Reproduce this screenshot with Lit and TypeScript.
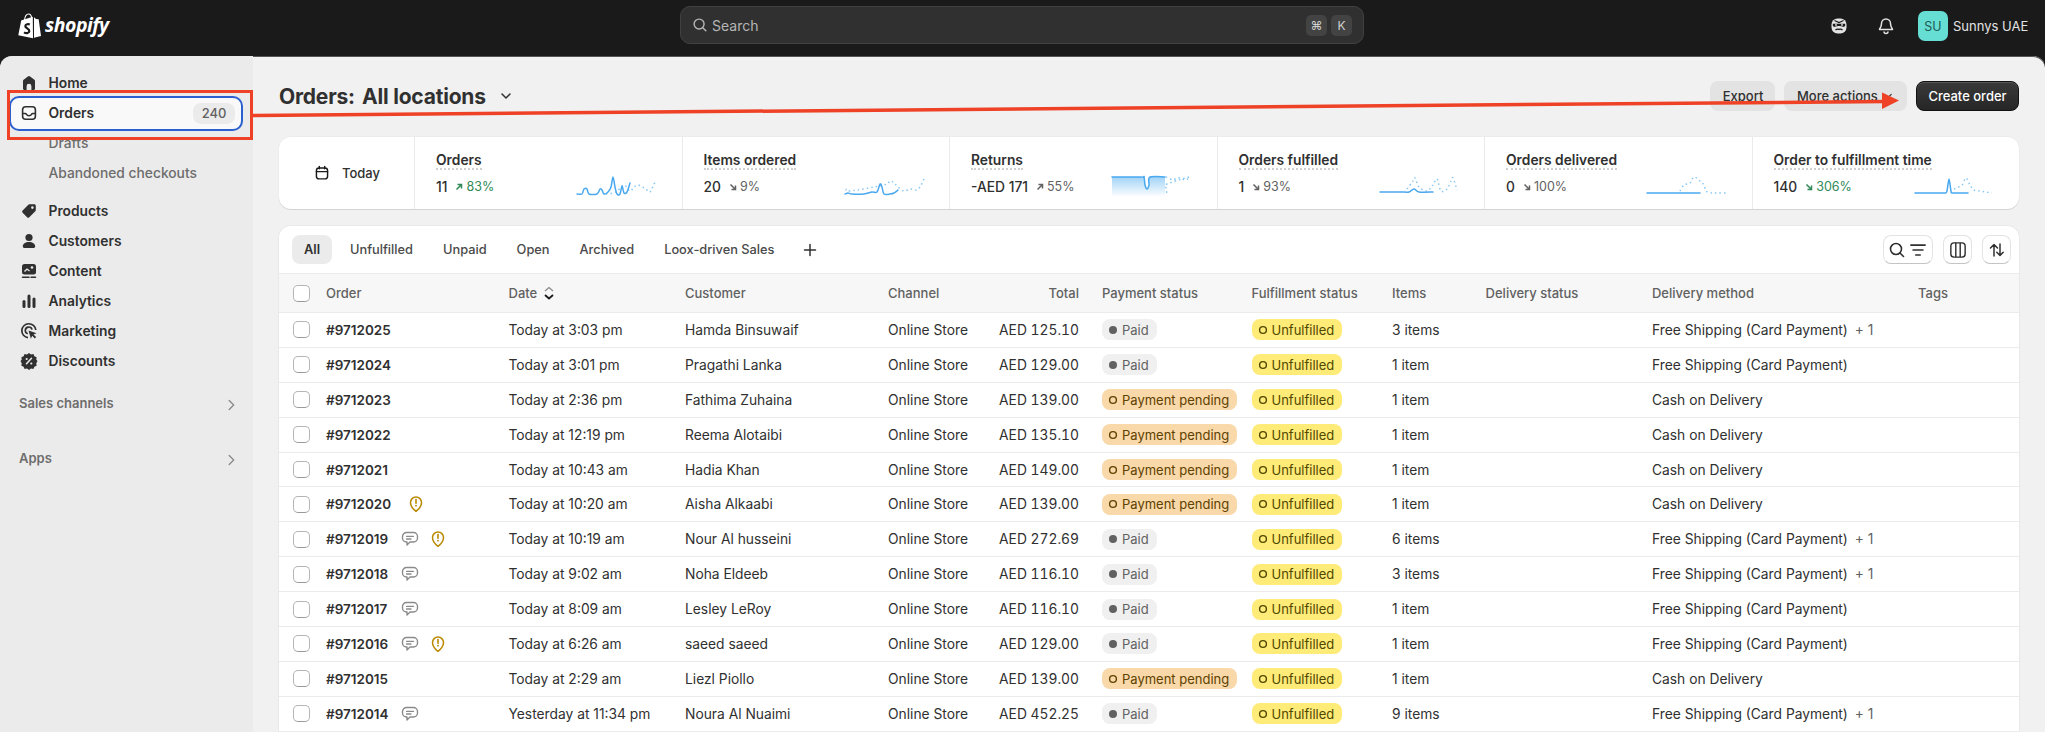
import { LitElement, html, css, svg } from "lit";
import { customElement } from "lit/decorators.js";

type Pt = [number, number];
const smooth = (p: Pt[]) => {
  const k = 0.16;
  let d = `M${p[0][0]} ${p[0][1]}`;
  for (let i = 0; i < p.length - 1; i++) {
    const a = p[Math.max(i - 1, 0)], b = p[i], c = p[i + 1], e = p[Math.min(i + 2, p.length - 1)];
    const c1x = b[0] + (c[0] - a[0]) * k, c1y = b[1] + (c[1] - a[1]) * k;
    const c2x = c[0] - (e[0] - b[0]) * k, c2y = c[1] - (e[1] - b[1]) * k;
    d += ` C${c1x.toFixed(1)} ${c1y.toFixed(1)} ${c2x.toFixed(1)} ${c2y.toFixed(1)} ${c[0]} ${c[1]}`;
  }
  return d;
};

interface Stat {
  label: string; value: string; pct: string; up: boolean; good: boolean;
  solid: Pt[]; dots: Pt[]; fill?: boolean;
}

const stats: Stat[] = [
  {
    label: "Orders", value: "11", pct: "83%", up: true, good: true,
    solid: [[1,19],[6,19],[8,14],[11,14],[13,19],[21,19],[24,14],[26,15],[28,19],[32,17],[35,12],[37,2],[39,12],[41,19],[44,19],[46,11],[48,18],[51,17],[54,8]],
    dots: [[30,19],[40,17],[48,10],[54,16],[58,12],[62,10],[66,12],[70,14],[74,17],[78,9],[81,6]],
  },
  {
    label: "Items ordered", value: "20", pct: "9%", up: false, good: false,
    solid: [[1,19],[4,18],[8,19],[20,19],[28,17],[33,17],[36,9],[38,12],[40,19],[46,19],[50,18],[54,15]],
    dots: [[2,14],[6,16],[40,10],[46,6],[50,8],[54,12],[60,16],[66,14],[72,15],[76,12],[80,4]],
  },
  {
    label: "Returns", value: "-AED 171", pct: "55%", up: true, good: false, fill: true,
    solid: [[1,2],[30,2],[33,2],[34,10],[36,14],[38,10],[39,2],[54,2]],
    dots: [[55,2],[58,3],[62,5],[66,3],[70,3],[74,5],[78,2],[56,9],[55,13],[56,19]],
  },
  {
    label: "Orders fulfilled", value: "1", pct: "93%", up: false, good: false,
    solid: [[1,17],[25,17],[30,17],[35,14],[40,17],[54,17]],
    dots: [[28,14],[34,6],[36,3],[40,12],[48,16],[54,10],[58,4],[62,16],[68,14],[72,6],[74,3],[78,15]],
  },
  {
    label: "Orders delivered", value: "0", pct: "100%", up: false, good: false,
    solid: [[1,18],[54,18]],
    dots: [[34,16],[38,10],[44,8],[48,2],[54,6],[58,10],[60,16],[66,18],[72,18],[80,18]],
  },
  {
    label: "Order to fulfillment time", value: "140", pct: "306%", up: false, good: true,
    solid: [[1,18],[24,18],[31,18],[33,16],[35,4],[37,16],[39,18],[54,18]],
    dots: [[40,14],[48,10],[52,3],[56,10],[60,15],[66,16],[72,17],[78,18]],
  },
];

const paid = "paid", pending = "pending";
const FREE = "Free Shipping (Card Payment)", COD = "Cash on Delivery";
const rows = [
  ["#9712025", "", "Today at 3:03 pm", "Hamda Binsuwaif", "AED 125.10", paid, "3 items", FREE, true],
  ["#9712024", "", "Today at 3:01 pm", "Pragathi Lanka", "AED 129.00", paid, "1 item", FREE, false],
  ["#9712023", "", "Today at 2:36 pm", "Fathima Zuhaina", "AED 139.00", pending, "1 item", COD, false],
  ["#9712022", "", "Today at 12:19 pm", "Reema Alotaibi", "AED 135.10", pending, "1 item", COD, false],
  ["#9712021", "", "Today at 10:43 am", "Hadia Khan", "AED 149.00", pending, "1 item", COD, false],
  ["#9712020", "p", "Today at 10:20 am", "Aisha Alkaabi", "AED 139.00", pending, "1 item", COD, false],
  ["#9712019", "cp", "Today at 10:19 am", "Nour Al husseini", "AED 272.69", paid, "6 items", FREE, true],
  ["#9712018", "c", "Today at 9:02 am", "Noha Eldeeb", "AED 116.10", paid, "3 items", FREE, true],
  ["#9712017", "c", "Today at 8:09 am", "Lesley LeRoy", "AED 116.10", paid, "1 item", FREE, false],
  ["#9712016", "cp", "Today at 6:26 am", "saeed saeed", "AED 129.00", paid, "1 item", FREE, false],
  ["#9712015", "", "Today at 2:29 am", "Liezl Piollo", "AED 139.00", pending, "1 item", COD, false],
  ["#9712014", "c", "Yesterday at 11:34 pm", "Noura Al Nuaimi", "AED 452.25", paid, "9 items", FREE, true],
] as const;

const navIcon: Record<string, unknown> = {
  home: svg`<path fill="currentColor" d="M8.900 3.400a1.800 1.800 0 0 1 2.200 0l4.300 3.400c.4.300.6.800.6 1.400v7.300c0 .8-.7 1.500-1.500 1.500H12.400v-3.800a2.400 2.400 0 0 0-4.800 0V17H5.500c-.8 0-1.500-.7-1.500-1.500V8.200c0-.6.2-1.100.6-1.400z"/>`,
  orders: svg`<g fill="none" stroke="currentColor" stroke-width="1.600"><rect x="3.600" y="3.800" width="12.800" height="12.400" rx="3"/><path d="M3.600 10.500h2.600c.6 0 1 .4 1.300.9.500.9 1.400 1.300 2.500 1.300s2-.4 2.500-1.300c.3-.5.7-.9 1.300-.9h2.600"/></g>`,
  tag: svg`<path fill="currentColor" fill-rule="evenodd" d="M11 3.200h4.300c.8 0 1.500.7 1.500 1.500V9c0 .5-.2.900-.5 1.200l-6 6a1.600 1.600 0 0 1-2.200 0l-4.500-4.500a1.600 1.600 0 0 1 0-2.200l6-6c.4-.2.900-.3 1.400-.3zm2.400 2.100a1.300 1.300 0 1 0 0 2.600 1.300 1.300 0 0 0 0-2.600z"/>`,
  person: svg`<circle cx="10" cy="6.500" r="3.600" fill="currentColor"/><path fill="currentColor" d="M3.800 15.600c0-2.900 2.600-4.600 6.200-4.600s6.200 1.700 6.200 4.600c0 .8-.6 1.400-1.400 1.400H5.200c-.8 0-1.400-.6-1.400-1.400z"/>`,
  content: svg`<rect x="3" y="3" width="14" height="10.500" rx="2.500" fill="currentColor"/><circle cx="13" cy="6.500" r="1.300" fill="#ebebeb"/><path d="M5.500 10.500l2.500-2.500 2.500 2" fill="none" stroke="#ebebeb" stroke-width="1.300"/><path d="M3.500 16.300h6.500M12 16.300h4.500" stroke="currentColor" stroke-width="1.500" stroke-linecap="round"/>`,
  bars: svg`<rect x="3.500" y="9" width="3" height="8" rx="1.500" fill="currentColor"/><rect x="8.500" y="3.500" width="3" height="13.500" rx="1.500" fill="currentColor"/><rect x="13.500" y="6.500" width="3" height="10.500" rx="1.500" fill="currentColor"/>`,
  target: svg`<path d="M9 16.700A7 7 0 1 1 16.800 9" fill="none" stroke="currentColor" stroke-width="1.700"/><path d="M8.800 12.700A3.400 3.400 0 1 1 13 8.600" fill="none" stroke="currentColor" stroke-width="1.700"/><path fill="currentColor" d="M9.500 9.500l8 2.700-3 1.300 2.600 2.600-1.300 1.300-2.600-2.600-1.300 3z"/>`,
  badge: svg`<path fill="currentColor" d="M10 2l2 1.400 2.400-.3 1 2.200 2.200 1-.3 2.400L18.500 10l-1.200 2.300.3 2.400-2.200 1-1 2.200-2.400-.3L10 19l-2-1.400-2.400.3-1-2.200-2.200-1 .3-2.400L1.500 10l1.200-1.300-.3-2.400 2.200-1 1-2.200 2.400.3z"/><path d="M7.500 12.800l5-5.500" stroke="#ebebeb" stroke-width="1.500" stroke-linecap="round"/><circle cx="7.700" cy="8" r="1.100" fill="#ebebeb"/><circle cx="12.300" cy="12.500" r="1.100" fill="#ebebeb"/>`,
};

const nav = [
  ["home", "Home"], ["orders", "Orders"], ["", "Drafts"], ["", "Abandoned checkouts"],
];
const nav2 = [
  ["tag", "Products"], ["person", "Customers"], ["content", "Content"],
  ["bars", "Analytics"], ["target", "Marketing"], ["badge", "Discounts"],
];

const ic = (body: unknown, size = 20, cls = "") =>
  html`<svg class=${cls} width=${size} height=${size} viewBox="0 0 20 20" aria-hidden="true">${body}</svg>`;

const chevronR = svg`<path d="M8 5l5 5-5 5" fill="none" stroke="currentColor" stroke-width="1.500" stroke-linecap="round" stroke-linejoin="round"/>`;
const chevronD = svg`<path d="M6 8l4 4 4-4" fill="none" stroke="currentColor" stroke-width="1.500" stroke-linecap="round" stroke-linejoin="round"/>`;
const searchI = svg`<circle cx="9" cy="9" r="5.500" fill="none" stroke="currentColor" stroke-width="1.600"/><path d="M13 13l3.500 3.500" stroke="currentColor" stroke-width="1.600" stroke-linecap="round"/>`;
const comment = svg`<path d="M6.500 3.500h7a4 4 0 0 1 4 4v1.500a4 4 0 0 1-4 4H10l-3 3v-3h-.5a4 4 0 0 1-4-4V7.500a4 4 0 0 1 4-4z" fill="none" stroke="#8a8a8a" stroke-width="1.400" stroke-linejoin="round"/><path d="M6.500 7.300h7M6.500 10h4.500" stroke="#8a8a8a" stroke-width="1.300" stroke-linecap="round"/>`;
const pin = svg`<path d="M10 17.300C7 15 4.500 12.500 4.500 8.500a5.500 5.500 0 0 1 11 0c0 4-2.500 6.500-5.500 8.800z" fill="none" stroke="#b98900" stroke-width="1.500" stroke-linejoin="round"/><path d="M10 5.500v3.700" stroke="#b98900" stroke-width="1.600" stroke-linecap="round"/><circle cx="10" cy="11.700" r=".9" fill="#b98900"/>`;

@customElement("app-root")
export class AppRoot extends LitElement {
  static styles = css`
    :host { display: block; position: relative; width: 2045px; height: 732px; overflow: hidden; background: #1a1a1a;
      font-family: Inter, "Liberation Sans", sans-serif; font-size: 13.800px; color: #303030; }
    * { box-sizing: border-box; }
    svg { display: block; flex: none; }
    .top { height: 56px; display: grid; grid-template-columns: 1fr 683px 1fr; align-items: center; padding: 0 18px 4px; color: #e3e3e3; }
    .brand { display: flex; align-items: center; gap: 4px; color: #fff; }
    .word { font-family: "Open Sans", sans-serif; font-style: italic; font-weight: 700; font-size: 19.500px; letter-spacing: -0.5px; line-height: 1; padding-bottom: 3px; }
    .search { margin: -2px 0 0 -1px; height: 38px; display: flex; align-items: center; background: #303030; border: 1px solid #414141; border-radius: 10px; padding: 0 11px 0 10px; color: #b5b5b5; }
    .search .lbl { margin-left: 3px; flex: 1; font-size: 14px; }
    .key { width: 21px; height: 21px; border-radius: 5px; background: #434343; display: grid; place-items: center; font-size: 12px; color: #d0d0d0; margin-left: 4px; }
    .right { display: flex; align-items: center; justify-content: flex-end; }
    .avatar { width: 30px; height: 30px; border-radius: 7px; background: #66ded3; color: #1e5a55; display: grid; place-items: center; font-size: 12.500px; margin-left: 22px; }
    .store { margin-left: 5px; white-space: nowrap; font-size: 13px; width: 74px; }
    .gap30 { margin-left: 27px; }

    .shell { height: 676px; display: flex; border-radius: 12px 12px 0 0; overflow: hidden; background: #f1f1f1; box-shadow: inset 0 1px 0 #555; }
    .side { width: 253px; flex: none; background: #ebebeb; padding-top: 12px; }
    .item { height: 30px; display: flex; align-items: center; padding-left: 19px; font-weight: 600; gap: 9.500px; color: #303030; }
    .item.sub { padding-left: 48.500px; color: #6d6d6d; font-weight: 500; }
    .item.active { height: 35px; margin: -2.500px 10px -2.500px 9px; padding: 0 6px 0 8px; background: #f9f9f9; border: 2px solid #2c5fcf; border-radius: 10px; color: #303030; }
    .count { margin-left: auto; height: 21px; width: 42px; border-radius: 8px; background: #ebebeb; display: grid; place-items: center; color: #616161; font-weight: 500; font-size: 13px; }
    .group { margin-top: 7.500px; }
    .section { display: flex; align-items: center; justify-content: space-between; height: 20px; padding: 0 13px 0 19px; color: #6d6d6d; font-weight: 600; font-size: 13px; }
    .section svg { color: #8a8a8a; margin-top: 4px; }
    .sec1 { margin-top: 17px; }
    .sec2 { margin-top: 35px; }

    .main { flex: 1; min-width: 0; padding: 25px 26px 0; }
    .head { height: 30px; display: flex; align-items: center; gap: 9px; }
    .title { font-size: 21px; font-weight: 650; color: #303030; display: flex; gap: 7px; letter-spacing: -0.2px; }
    .chev { color: #303030; margin-left: 1px; }
    .actions { margin-left: auto; display: flex; gap: 9px; font-size: 13px; }
    .btn { height: 30px; padding: 0 12px; border-radius: 8px; background: #e3e3e3; display: flex; align-items: center; gap: 2px; font-weight: 550; color: #303030; white-space: nowrap; }
    .btn.primary { background: linear-gradient(#3a3a3a, #262626); color: #fff; border: 1px solid #111; box-shadow: inset 0 1px 0 #555; width: 103px; justify-content: center; padding: 0; }
    .btn.wide { width: 123px; padding: 0 12px 0 13px; }
    .btn.exp { width: 65px; justify-content: center; padding: 0 0 0 1px; }

    .stats { margin-top: 26px; height: 72px; background: #fff; border-radius: 12px; display: grid; grid-template-columns: 135px repeat(6, minmax(0, 1fr)); box-shadow: 0 1px 0 rgba(0,0,0,.1), 0 0 0 1px rgba(0,0,0,.02); overflow: hidden; }
    .today { display: flex; align-items: center; gap: 11px; padding-left: 34px; font-weight: 550; font-size: 13px; }
    .stat { border-left: 1px solid #ebebeb; display: flex; align-items: flex-end; padding: 0 0 12px 21px; }
    .stat .txt { width: 140px; flex: none; align-self: stretch; display: flex; flex-direction: column; padding-top: 15px; }
    .lab { font-weight: 600; align-self: flex-start; line-height: 16px; border-bottom: 2px dotted #cfcfcf; white-space: nowrap; }
    .val { display: flex; align-items: center; margin-top: 9px; line-height: 16px; font-weight: 500; white-space: nowrap; }
    .pct { display: flex; align-items: center; gap: 2px; margin-left: 7px; color: #616161; font-size: 12.500px; font-weight: 400; }
    .pct.good { color: #2f8a57; }

    .table { margin-top: 17px; background: #fff; border-radius: 12px 12px 0 0; box-shadow: 0 0 0 1px rgba(0,0,0,.03); }
    .tabs { height: 47px; display: flex; align-items: center; padding: 0 8px 0 13px; gap: 6px; font-size: 12.800px; }
    .tab { height: 29px; padding: 0 12px; border-radius: 8px; display: flex; align-items: center; font-weight: 500; color: #4a4a4a; }
    .tab.on { background: #ebebeb; color: #303030; font-weight: 600; }
    .plus { margin-left: 8px; color: #303030; }
    .tools { margin-left: auto; display: flex; gap: 10px; }
    .tool { height: 29px; min-width: 29px; background: #fff; border-radius: 8px; border: 1px solid #e3e3e3; border-bottom-color: #c4c4c4; display: flex; align-items: center; justify-content: center; color: #303030; }
    .tool.two { width: 50px; }
    .grid { display: grid; grid-template-columns: 47px 182.500px 176.500px 203px 100px 114px 149.500px 140.500px 93.600px 166.400px 266px 101px; align-items: center; }
    .grid.hd { height: 40px; background: #f7f7f7; border-top: 1px solid #ebebeb; border-bottom: 1px solid #ebebeb; color: #616161; font-weight: 550; font-size: 13px; }
    .grid.row { height: 34.900px; border-bottom: 1px solid #ebebeb; color: #303030; }
    .cb { width: 17px; height: 17px; margin-left: 14px; border: 1px solid #b5b5b5; border-bottom-color: #9a9a9a; border-radius: 5px; background: #fff; }
    .sort { display: inline-flex; align-items: center; gap: 2px; }
    .ord { display: flex; align-items: center; font-weight: 600; font-size: 13.500px; }
    .num { width: 66px; flex: none; }
    .ico { margin-left: 8px; }
    .ico.alone { margin-left: 14px; }
    .tot { text-align: right; padding-right: 23px; white-space: nowrap; }
    .row .tot { font-variant-numeric: tabular-nums; }
    .chip { display: inline-flex; align-items: center; height: 21px; border-radius: 8px; padding: 0 8px 0 6px; font-size: 13px; gap: 4px; white-space: nowrap; }
    .chip.paid { background: #f0f0f0; color: #616161; }
    .chip.pending { background: #f9d8a9; color: #5e4200; }
    .chip.unf { background: #ffeb78; color: #4f4700; }
    .more { color: #616161; margin-left: 7px; }
    .nowrap { white-space: nowrap; display: flex; }

    .annot { position: absolute; inset: 0; pointer-events: none; }
  `;

  private spark(s: Stat) {
    const d = smooth(s.solid);
    const end = s.solid[s.solid.length - 1];
    return html`<svg width="84" height="22" viewBox="0 0 84 22" aria-hidden="true">
      <defs><linearGradient id="sf" x1="0" y1="0" x2="0" y2="1"><stop offset="0" stop-color="#9fd2f7"/><stop offset="1" stop-color="#ffffff"/></linearGradient></defs>
      ${s.fill ? svg`<path d="${d} L${end[0]} 22 L1 22 Z" fill="url(#sf)"/>` : ""}
      <path d=${smooth(s.dots)} fill="none" stroke="#8ac8f4" stroke-width="1.500" stroke-dasharray="1.500 3"/>
      <path d=${d} fill="none" stroke="#4aa8ef" stroke-width="1.500" stroke-linejoin="round" stroke-linecap="round"/>
    </svg>`;
  }

  private trend(up: boolean) {
    return html`<svg width="10" height="10" viewBox="0 0 10 10" aria-hidden="true">
      ${up
        ? svg`<path d="M2.500 7.500L7 3M3.500 2.500H7.500V6.500" fill="none" stroke="currentColor" stroke-width="1.500"/>`
        : svg`<path d="M2.500 2.500L7 7M3.500 7.500H7.500V3.500" fill="none" stroke="currentColor" stroke-width="1.500"/>`}
    </svg>`;
  }

  private ring(color: string, solid = false) {
    return html`<svg width="10" height="10" viewBox="0 0 10 10" aria-hidden="true">
      <circle cx="5" cy="5" r=${solid ? 4 : 3.400} fill=${solid ? color : "none"} stroke=${color} stroke-width=${solid ? 0 : 1.400}/>
    </svg>`;
  }

  render() {
    return html`
      <header class="top">
        <div class="brand">
          <svg width="23" height="26" viewBox="0 0 23 26" aria-hidden="true">
            <path fill="#fff" d="M14.800 3.800L3.700 7.200c-.4.100-.5.300-.6.700L.3 22.300 15 25.200z"/>
            <path fill="#fff" d="M16 4.200l2 1.800 2.400.2c.2 0 .3.100.3.300L23 23l-7 1.700z"/>
            <path fill="none" stroke="#fff" stroke-width="1.100" d="M6.500 7C7 3.500 8.700 1 10.500 1c1.900 0 3 2 3.200 4.500"/>
            <path fill="none" stroke="#1a1a1a" stroke-width="2.200" d="M11.800 11.500c-1.500-.8-4.300-.5-4.500 1.500-.2 2.400 4.300 2.500 4 5.200-.3 2.500-3.500 2.300-5.300 1.200"/>
          </svg>
          <span class="word">shopify</span>
        </div>
        <div class="search">
          ${ic(searchI, 18)}
          <span class="lbl">Search</span>
          <span class="key">⌘</span><span class="key">K</span>
        </div>
        <div class="right">
          ${ic(svg`<rect x="2.500" y="2.500" width="15" height="15" rx="6" fill="#e3e3e3"/><path d="M5.500 4.500L10 6.500l4.500-2" stroke="#1a1a1a" stroke-width="1.200" fill="none"/><path d="M3.800 7.800h12.400v1.400c0 1-1 1.600-2.200 1.600-1.300 0-2.500-.7-4-.7s-2.700.7-4 .7c-1.200 0-2.200-.6-2.200-1.600z" fill="#1a1a1a"/><circle cx="7" cy="8.900" r=".9" fill="#e3e3e3"/><circle cx="13" cy="8.900" r=".9" fill="#e3e3e3"/><path d="M6.500 14c1-.9 2.300-1.200 3.500-.6 1.200-.6 2.500-.3 3.500.6" stroke="#1a1a1a" stroke-width="1.300" fill="none"/>`)}
          <span class="gap30">${ic(svg`<path d="M10 3a4.500 4.500 0 0 0-4.500 4.500c0 3.500-1.700 4.700-2 6h13c-.3-1.300-2-2.500-2-6A4.500 4.500 0 0 0 10 3z" fill="none" stroke="currentColor" stroke-width="1.500" stroke-linejoin="round"/><path d="M8 15.500a2 2 0 0 0 4 0" fill="none" stroke="currentColor" stroke-width="1.500"/>`)}</span>
          <span class="avatar">SU</span>
          <span class="store">Sunnys UAE</span>
        </div>
      </header>

      <div class="shell">
        <nav class="side">
          ${nav.map(([i, t]) =>
            i
              ? html`<div class="item ${t === "Orders" ? "active" : ""}">${ic(navIcon[i])}<span>${t}</span>${t === "Orders" ? html`<span class="count">240</span>` : ""}</div>`
              : html`<div class="item sub">${t}</div>`)}
          <div class="group">
            ${nav2.map(([i, t]) => html`<div class="item">${ic(navIcon[i])}<span>${t}</span></div>`)}
          </div>
          <div class="section sec1"><span>Sales channels</span>${ic(chevronR, 18)}</div>
          <div class="section sec2"><span>Apps</span>${ic(chevronR, 18)}</div>
        </nav>

        <main class="main">
          <div class="head">
            <div class="title"><span>Orders:</span><span>All locations</span></div>
            ${ic(chevronD, 20, "chev")}
            <div class="actions">
              <div class="btn exp">Export</div>
              <div class="btn wide">More actions ${ic(chevronD, 16)}</div>
              <div class="btn primary">Create order</div>
            </div>
          </div>

          <section class="stats">
            <div class="today">
              ${ic(svg`<rect x="3.800" y="4.500" width="12.400" height="12" rx="3" fill="none" stroke="#1a1a1a" stroke-width="1.600"/><path d="M3.800 8.500h12.400M7 2.800v2.500M13 2.800v2.500" stroke="#1a1a1a" stroke-width="1.600" stroke-linecap="round"/>`, 18)}
              <span>Today</span>
            </div>
            ${stats.map((s) => html`
              <div class="stat">
                <div class="txt">
                  <span class="lab">${s.label}</span>
                  <div class="val">${s.value}<span class="pct ${s.good ? "good" : ""}">${this.trend(s.up)}${s.pct}</span></div>
                </div>
                ${this.spark(s)}
              </div>`)}
          </section>

          <section class="table">
            <div class="tabs">
              ${["All", "Unfulfilled", "Unpaid", "Open", "Archived", "Loox-driven Sales"].map(
                (t, i) => html`<div class="tab ${i === 0 ? "on" : ""}">${t}</div>`)}
              <span class="plus">${ic(svg`<path d="M10 4.500v11M4.500 10h11" stroke="currentColor" stroke-width="1.500" stroke-linecap="round"/>`, 20)}</span>
              <div class="tools">
                <div class="tool two">
                  ${ic(searchI, 20)}
                  ${ic(svg`<path d="M3.500 5.500h13M5.500 10h9M8 14.500h4" stroke="currentColor" stroke-width="1.500" stroke-linecap="round"/>`, 22)}
                </div>
                <div class="tool">${ic(svg`<rect x="3.500" y="3.500" width="13" height="13" rx="3" fill="none" stroke="currentColor" stroke-width="1.300"/><path d="M8 3.500v13M12 3.500v13" stroke="currentColor" stroke-width="1.300"/>`, 22)}</div>
                <div class="tool">${ic(svg`<path d="M7 16V4.500M3.500 8L7 4.500 10.500 8" fill="none" stroke="currentColor" stroke-width="1.500" stroke-linecap="round" stroke-linejoin="round"/><path d="M13 4v11.500M9.800 12.300L13 15.500l3.200-3.200" fill="none" stroke="currentColor" stroke-width="1.500" stroke-linecap="round" stroke-linejoin="round"/>`, 20)}</div>
              </div>
            </div>
            <div class="grid hd">
              <div class="cb"></div>
              <div>Order</div>
              <div class="sort">Date ${ic(svg`<path d="M6 8l4-3.500L14 8" fill="none" stroke="#8a8a8a" stroke-width="1.300"/><path d="M6 12l4 3.500 4-3.500" fill="none" stroke="#1a1a1a" stroke-width="1.800"/>`, 20)}</div>
              <div>Customer</div>
              <div>Channel</div>
              <div class="tot">Total</div>
              <div>Payment status</div>
              <div>Fulfillment status</div>
              <div>Items</div>
              <div>Delivery status</div>
              <div>Delivery method</div>
              <div>Tags</div>
            </div>
            ${rows.map((r) => html`
              <div class="grid row">
                <div class="cb"></div>
                <div class="ord">
                  <span class="num">${r[0]}</span>
                  ${r[1].includes("c") ? ic(comment, 20, "ico") : ""}
                  ${r[1].includes("p") ? ic(pin, 20, r[1] === "p" ? "ico alone" : "ico") : ""}
                </div>
                <div>${r[2]}</div>
                <div>${r[3]}</div>
                <div>Online Store</div>
                <div class="tot">${r[4]}</div>
                <div>
                  ${r[5] === paid
                    ? html`<span class="chip paid">${this.ring("#616161", true)}Paid</span>`
                    : html`<span class="chip pending">${this.ring("#5e4200")}Payment pending</span>`}
                </div>
                <div><span class="chip unf">${this.ring("#4f4700")}Unfulfilled</span></div>
                <div>${r[6]}</div>
                <div></div>
                <div class="nowrap">${r[7]}${r[8] ? html`<span class="more">+ 1</span>` : ""}</div>
                <div></div>
              </div>`)}
          </section>
        </main>
      </div>

      <svg class="annot" width="2045" height="732" viewBox="0 0 2045 732" aria-hidden="true">
        <rect x="8.500" y="91.500" width="243" height="47" fill="none" stroke="#ee4125" stroke-width="3"/>
        <path d="M252 115.500L1886 101.500" stroke="#ee4125" stroke-width="3.500"/>
        <path d="M1882 92.500L1899 100.500 1882 109z" fill="#ee4125"/>
      </svg>
    `;
  }
}
